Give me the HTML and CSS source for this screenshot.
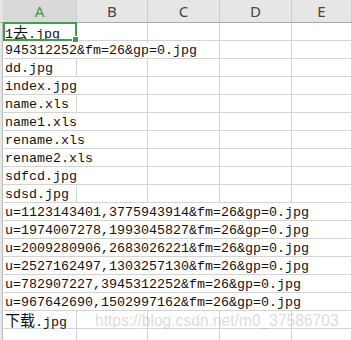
FILE: index.html
```html
<!DOCTYPE html>
<html>
<head>
    <meta charset="utf-8">
    <title>Sheet1</title>
    <link rel="stylesheet" href="styles.css">
</head>
<body>
    <div class="sheet">
        <div class="row head">
            <div class="stub"></div>
            <div class="col sel">A</div>
            <div class="col">B</div>
            <div class="col">C</div>
            <div class="col">D</div>
            <div class="col">E</div>
        </div>

        <div class="row first">
            <div class="stub"></div>
            <div class="cell">1<span class="cjk">去</span>.jpg</div>
            <div class="cell"></div><div class="cell"></div><div class="cell"></div><div class="cell"></div>
            <div class="active"><i class="handle"></i></div>
        </div>
        <div class="row">
            <div class="stub"></div>
            <div class="cell span3">945312252&amp;fm=26&amp;gp=0.jpg</div>
            <div class="cell"></div><div class="cell"></div>
        </div>
        <div class="row">
            <div class="stub"></div>
            <div class="cell">dd.jpg</div>
            <div class="cell"></div><div class="cell"></div><div class="cell"></div><div class="cell"></div>
        </div>
        <div class="row">
            <div class="stub"></div>
            <div class="cell span2">index.jpg</div>
            <div class="cell"></div><div class="cell"></div><div class="cell"></div>
        </div>
        <div class="row">
            <div class="stub"></div>
            <div class="cell">name.xls</div>
            <div class="cell"></div><div class="cell"></div><div class="cell"></div><div class="cell"></div>
        </div>
        <div class="row">
            <div class="stub"></div>
            <div class="cell span2">name1.xls</div>
            <div class="cell"></div><div class="cell"></div><div class="cell"></div>
        </div>
        <div class="row">
            <div class="stub"></div>
            <div class="cell span2">rename.xls</div>
            <div class="cell"></div><div class="cell"></div><div class="cell"></div>
        </div>
        <div class="row">
            <div class="stub"></div>
            <div class="cell span2">rename2.xls</div>
            <div class="cell"></div><div class="cell"></div><div class="cell"></div>
        </div>
        <div class="row">
            <div class="stub"></div>
            <div class="cell span2">sdfcd.jpg</div>
            <div class="cell"></div><div class="cell"></div><div class="cell"></div>
        </div>
        <div class="row">
            <div class="stub"></div>
            <div class="cell">sdsd.jpg</div>
            <div class="cell"></div><div class="cell"></div><div class="cell"></div><div class="cell"></div>
        </div>
        <div class="row">
            <div class="stub"></div>
            <div class="cell span5">u=1123143401,3775943914&amp;fm=26&amp;gp=0.jpg</div>
        </div>
        <div class="row">
            <div class="stub"></div>
            <div class="cell span5">u=1974007278,1993045827&amp;fm=26&amp;gp=0.jpg</div>
        </div>
        <div class="row">
            <div class="stub"></div>
            <div class="cell span5">u=2009280906,2683026221&amp;fm=26&amp;gp=0.jpg</div>
        </div>
        <div class="row">
            <div class="stub"></div>
            <div class="cell span5">u=2527162497,1303257130&amp;fm=26&amp;gp=0.jpg</div>
        </div>
        <div class="row">
            <div class="stub"></div>
            <div class="cell span5">u=782907227,3945312252&amp;fm=26&amp;gp=0.jpg</div>
        </div>
        <div class="row">
            <div class="stub"></div>
            <div class="cell span5">u=967642690,1502997162&amp;fm=26&amp;gp=0.jpg</div>
        </div>
        <div class="row">
            <div class="stub"></div>
            <div class="cell"><span class="cjk">下载</span>.jpg</div>
            <div class="cell"></div><div class="cell"></div><div class="cell"></div><div class="cell"></div>
        </div>
        <div class="row">
            <div class="stub"></div>
            <div class="cell"></div><div class="cell"></div><div class="cell"></div><div class="cell"></div><div class="cell"></div>
        </div>

        <div class="mark">https://blog.csdn.net/m0_37586703</div>
    </div>
</body>
</html>
```

FILE: styles.css
```css
html,
body {
    margin: 0;
    padding: 0;
    background-color: #ffffff;
}

.sheet {
    position: relative;
    width: 352px;
    height: 340px;
    overflow: hidden;
}

.row {
    display: grid;
    grid-template-columns: 3px 74px 71px 72px 72px 60px;
    height: 18px;
    box-sizing: border-box;
    border-bottom: 1px solid #d4d4d4;
}

.first {
    position: relative;
}

.stub {
    background-color: #e6e6e6;
    border-right: 1px solid #bcbcbc;
    box-sizing: border-box;
}

.head {
    height: 23px;
    background-color: #e6e6e6;
    border-bottom: 1px solid #ababab;
}

.head .stub {
    border-right: none;
}

.col {
    font-family: "Noto Sans", sans-serif;
    font-size: 15px;
    line-height: 22px;
    text-align: center;
    color: #444444;
    border-right: 1px solid #cdcdcd;
}

.col.sel {
    color: #3f9a46;
    background-color: #d9d9d9;
}

.cell {
    border-right: 1px solid #d4d4d4;
    font-family: "Liberation Mono", monospace;
    font-size: 13.33px;
    line-height: 17px;
    padding-top: 1px;
    padding-left: 2px;
    white-space: nowrap;
    color: #111111;
}

.span2 {
    grid-column: span 2;
}

.span3 {
    grid-column: span 3;
}

.span5 {
    grid-column: span 5;
}

.cjk {
    font-family: "Noto Sans CJK SC", sans-serif;
    font-size: 15px;
    line-height: 1;
}

/* selection box over cell A1 */
.active {
    position: absolute;
    top: -1px;
    left: 3px;
    width: 74px;
    height: 19px;
    box-sizing: border-box;
    border: 2px solid #3f9f47;
    z-index: 1;
}

.handle {
    position: absolute;
    right: -4px;
    bottom: -4px;
    width: 5px;
    height: 5px;
    background-color: #3f9f47;
    border: 1px solid #ffffff;
}

.mark {
    position: absolute;
    left: 95px;
    top: 312px;
    font-family: "Liberation Sans", sans-serif;
    font-size: 15.6px;
    color: rgba(190, 190, 190, 0.55);
    white-space: nowrap;
}
```
